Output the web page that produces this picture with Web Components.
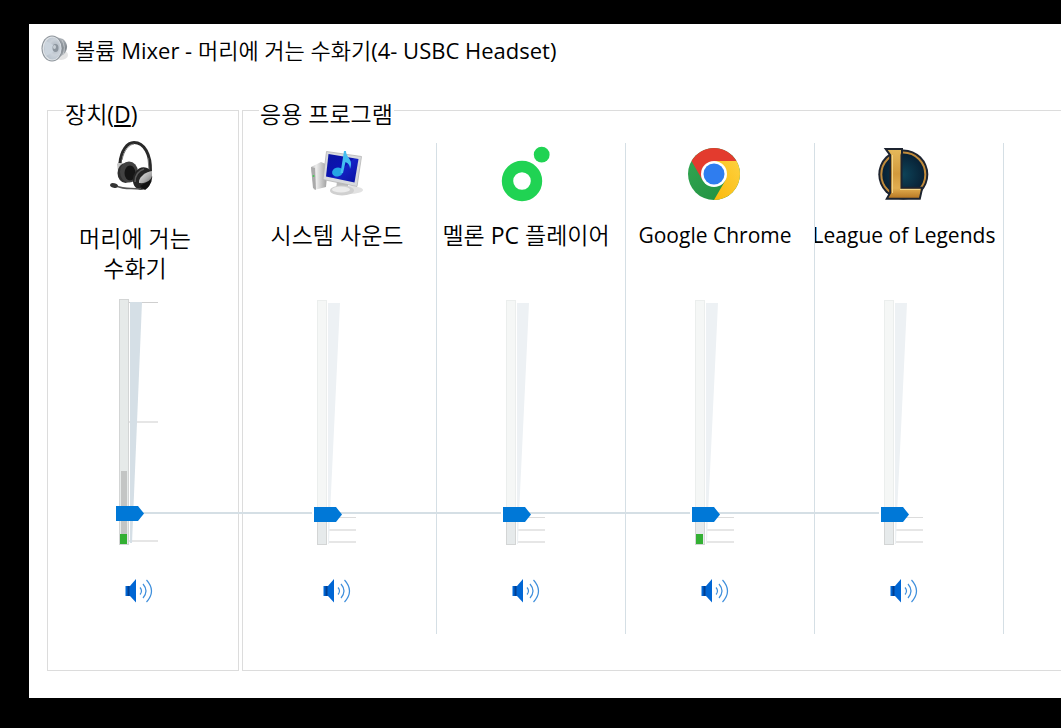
<!DOCTYPE html>
<html lang="ko">
<head>
<meta charset="utf-8">
<title>볼륨 Mixer</title>
<style>
  :root {
    --blue: #0078d7;
    --line: #d5dfe5;
    --box: #dcdcdc;
  }

  body {
    margin: 0;
    padding: 24px 0 30px 29px;
    background: #000;
    color: #000;
    font-family: 'Open Sans', 'Noto Sans CJK KR DemiLight', 'Noto Sans CJK KR', sans-serif;
    font-size: 23px;
    line-height: 30px;
    overflow-x: hidden;
  }
</style>
</head>
<body>

<mixer-window>
  <svg slot="icon" width="28" height="28" viewBox="0 0 28 28" aria-hidden="true">
    <defs>
      <radialGradient id="cone" cx=".65" cy=".45" r=".7">
        <stop offset="0" stop-color="#a9b2bb"/><stop offset=".5" stop-color="#cbd2da"/><stop offset="1" stop-color="#b4bfca"/>
      </radialGradient>
      <linearGradient id="back" x1="0" y1="0" x2="0" y2="1">
        <stop offset="0" stop-color="#b9bec3"/><stop offset=".5" stop-color="#7f868d"/><stop offset="1" stop-color="#c6c9cc"/>
      </linearGradient>
    </defs>
    <ellipse cx="20" cy="20" rx="7" ry="5" fill="#e4e4e4"/>
    <path d="M12 1 L22 4 Q29 10 24 18 L14 26 Z" fill="url(#back)"/>
    <path d="M21 5 Q25 12 22 20" stroke="#c3c8cc" fill="none"/>
    <ellipse cx="11" cy="13.5" rx="10.5" ry="13" fill="#8e959c"/>
    <ellipse cx="11" cy="13.5" rx="9.5" ry="12" fill="#dfe3e7"/>
    <ellipse cx="11.5" cy="13.5" rx="8.5" ry="11" fill="url(#cone)"/>
    <path d="M5 6 L14 11 L14 16 L5 21 Q2 13 5 6 Z" fill="#ccd5de"/>
    <ellipse cx="14.5" cy="13" rx="3" ry="4" fill="#8c959e"/>
    <ellipse cx="13.5" cy="12" rx="1.5" ry="2" fill="#c7ced5"/>
  </svg>
  <span slot="title">볼륨 Mixer - 머리에 거는 수화기(4- USBC Headset)</span>

  <mixer-group class="device">
    <span slot="legend">장치(<u>D</u>)</span>
    <mixer-channel kind="device" value="11.7" meter="10" peak="73">
      <svg slot="icon" width="52" height="52" viewBox="109 143 52 52" overflow="visible" aria-hidden="true">
        <defs>
          <linearGradient id="silver" x1="0" y1="0" x2="1" y2="1">
            <stop offset="0" stop-color="#eee"/><stop offset=".6" stop-color="#aaa"/><stop offset="1" stop-color="#666"/>
          </linearGradient>
        </defs>
        <path d="M117 164 L121 160 L124 167 L118 172 Z" fill="#c4c4c4"/>
        <path d="M120 163 C121 151 127 142.500 134 142.500 C144 142.500 151 154 150.500 172" fill="none" stroke="#292929" stroke-width="3"/>
        <path d="M122 160 C124 150 129 144.500 134 144" fill="none" stroke="#777" stroke-width="1"/>
        <path d="M148 158 L149 170" stroke="#777" stroke-width="1"/>
        <ellipse cx="125.500" cy="173" rx="8" ry="10" fill="#303030"/>
        <ellipse cx="129" cy="172" rx="9" ry="10.500" fill="#424242"/>
        <ellipse cx="130" cy="173" rx="5.500" ry="7.500" fill="#151515"/>
        <ellipse cx="142.500" cy="178.500" rx="9.500" ry="11.500" transform="rotate(20 142.500 178.500)" fill="#252525"/>
        <path d="M135 182 Q135 172 144 169" fill="none" stroke="#5a5a5a" stroke-width="1.500"/>
        <path d="M139 181 C140 176 146 172 152 171 L152 176 C151 180 146 184 139 183 Z" fill="url(#silver)"/>
        <path d="M140 186 L151 180 Q150 187 145 190 Z" fill="#111"/>
        <path d="M116 186 Q122 188.500 131 188.500 L141 189" fill="none" stroke="#555" stroke-width="1.500"/>
        <ellipse cx="114" cy="185.500" rx="4" ry="2.200" transform="rotate(12 114 185.500)" fill="#333"/>
      </svg>
      머리에 거는 수화기
    </mixer-channel>
  </mixer-group>

  <mixer-group class="apps">
    <span slot="legend">응용 프로그램</span>

    <mixer-channel value="11.3">
      <svg slot="icon" width="52" height="52" viewBox="310 148 52 52" overflow="visible" aria-hidden="true">
        <defs>
          <linearGradient id="screen" x1="0" y1="0" x2="1" y2="1">
            <stop offset="0" stop-color="#0a15a0"/><stop offset=".5" stop-color="#0b12b4"/><stop offset=".52" stop-color="#1523c6"/><stop offset="1" stop-color="#0810a0"/>
          </linearGradient>
          <linearGradient id="tower" x1="0" y1="0" x2="1" y2="0">
            <stop offset="0" stop-color="#b8b8b8"/><stop offset=".3" stop-color="#eee"/><stop offset="1" stop-color="#999"/>
          </linearGradient>
        </defs>
        <ellipse cx="348" cy="190" rx="14" ry="4" fill="#e2e2e2"/>
        <path d="M310 167 L320 162 L327 165 L325 187 L313 190 Z" fill="url(#tower)"/>
        <path d="M310 167 L314 168 L315 190 L312 188 Z" fill="#aaa"/>
        <circle cx="312.500" cy="176" r="1" fill="#4c5"/>
        <path d="M336 181 L347 183 L347 190 L335 190 Z" fill="#bbb"/>
        <ellipse cx="341" cy="190.500" rx="12" ry="5" fill="#d0d0d0"/>
        <ellipse cx="340" cy="189.500" rx="9" ry="3" fill="#ececec"/>
        <path d="M325.500 151.500 L360.500 156.500 L356 186.500 L322 179.500 Z" fill="#d8dadd" stroke="#b5b5b5" stroke-width=".8"/>
        <path d="M327.500 154 L357.500 159 L353.500 182.500 L325 176.500 Z" fill="url(#screen)"/>
        <ellipse cx="336.500" cy="172" rx="5.500" ry="4.500" transform="rotate(-15 336.500 172)" fill="#25a5e4"/>
        <path d="M339.500 173 L343 151 L345 151 C345 158 353 159 349 169 C349 164 346 163 344.500 162 L342 173 Z" fill="#43bdf0"/>
      </svg>
      시스템 사운드
    </mixer-channel>

    <mixer-channel value="11.3">
      <svg slot="icon" width="52" height="52" viewBox="500 148 52 52" overflow="visible" aria-hidden="true">
        <circle cx="522" cy="181" r="14.500" fill="none" stroke="#20d353" stroke-width="11.400"/>
        <circle cx="541.700" cy="154.700" r="7.900" fill="#20d353"/>
      </svg>
      멜론 PC 플레이어
    </mixer-channel>

    <mixer-channel value="11.3" meter="10" lang="en">
      <svg slot="icon" width="52" height="52" viewBox="0 0 52 52" overflow="visible" aria-hidden="true">
        <defs>
          <linearGradient id="green" x1="0" y1="0" x2="1" y2="1">
            <stop offset="0" stop-color="#34a853"/><stop offset="1" stop-color="#1e8e3e"/>
          </linearGradient>
          <linearGradient id="yellow" x1="1" y1="0" x2="0" y2="1">
            <stop offset="0" stop-color="#fdd13f"/><stop offset="1" stop-color="#fbb90a"/>
          </linearGradient>
        </defs>
        <circle cx="25" cy="26" r="26" fill="url(#green)"/>
        <path d="M25 13 H47.500 A26 26 0 0 1 25 52 L36.300 32.500 Z" fill="url(#yellow)"/>
        <path d="M25 13 H47.500 A26 26 0 0 0 2.500 13 L13.700 32.500 Z" fill="#e33b2e"/>
        <circle cx="25" cy="26" r="13" fill="#fff"/>
        <circle cx="25" cy="26" r="10.500" fill="#2f7def"/>
      </svg>
      Google Chrome
    </mixer-channel>

    <mixer-channel value="11.3" lang="en" last>
      <svg slot="icon" width="52" height="52" viewBox="0 0 52 52" overflow="visible" aria-hidden="true">
        <defs>
          <radialGradient id="navy">
            <stop offset="0" stop-color="#0d4358"/><stop offset="1" stop-color="#081f33"/>
          </radialGradient>
          <linearGradient id="gold" x1="0" y1="0" x2="0" y2="1">
            <stop offset="0" stop-color="#e5b85a"/><stop offset=".5" stop-color="#d29a3c"/><stop offset=".8" stop-color="#e2ae50"/><stop offset="1" stop-color="#b87925"/>
          </linearGradient>
        </defs>
        <circle cx="25.300" cy="26.500" r="25" fill="#1d2430"/>
        <circle cx="25.300" cy="26.500" r="22" fill="url(#navy)" stroke="#c18b3b" stroke-width="2"/>
        <path d="M9.700 2 H23 V5 L22.500 7 V40.700 H43 L41 49.800 H10.500 L13.200 45 V6.700 Z" fill="url(#gold)" stroke="#1d2430" stroke-width="4" paint-order="stroke"/>
        <path d="M14.500 7 V45" stroke="#f3d588"/>
        <path d="M22 41.500 H42" stroke="#f3d588"/>
      </svg>
      League of Legends
    </mixer-channel>
  </mixer-group>
</mixer-window>

<script>
'use strict';

function makeTemplate(html) {
  const template = document.createElement('template');
  template.innerHTML = html;
  return template;
}

/* ---------- Window ---------- */
const windowTemplate = makeTemplate(`
  <style>
    :host {
      display: block;
      background: #fff;
      overflow: hidden;
    }

    header {
      display: flex;
      align-items: center;
      gap: 6px;
      height: 28px;
      padding: 11px 12px 27px;
    }

    h1 {
      margin: 0;
      padding-top: 2px;
      font-size: 22px;
      font-weight: inherit;
      white-space: nowrap;
    }

    .groups {
      display: flex;
      gap: 3px;
      padding: 0 0 27px 18px;
      margin-right: -1px;
    }

    ::slotted(.device) {
      flex: none;
      width: 192px;
    }

    ::slotted(.apps) {
      flex: 1;
      min-width: 0;
      --inset: 5px;
    }
  </style>

  <header>
    <slot name="icon"></slot>
    <h1><slot name="title"></slot></h1>
  </header>
  <main class="groups"><slot></slot></main>
`);

class MixerWindow extends HTMLElement {
  constructor() {
    super();
    this.attachShadow({ mode: 'open' });
    this.shadowRoot.appendChild(windowTemplate.content.cloneNode(true));
  }
}
customElements.define('mixer-window', MixerWindow);

/* ---------- Group box ---------- */
const groupTemplate = makeTemplate(`
  <style>
    :host {
      display: block;
    }

    fieldset {
      margin: 0;
      padding: 13px 0 36px;
      border: 1px solid var(--box);
      min-width: 0;
    }

    /* the caption hangs a little below the border line */
    legend {
      margin-left: 16px;
      padding: 8px 1px 0;
      line-height: 32px;
    }

    .row {
      display: flex;
      padding-left: var(--inset, 0);
    }
  </style>

  <fieldset>
    <legend><slot name="legend"></slot></legend>
    <div class="row"><slot></slot></div>
  </fieldset>
`);

class MixerGroup extends HTMLElement {
  constructor() {
    super();
    this.attachShadow({ mode: 'open' });
    this.shadowRoot.appendChild(groupTemplate.content.cloneNode(true));
  }
}
customElements.define('mixer-group', MixerGroup);

/* ---------- Fader ---------- */
const faderTemplate = makeTemplate(`
  <style>
    :host {
      display: block;
      position: relative;
      width: 46px;
      height: 248px;
    }

    svg {
      display: block;
    }

    /* the range input lies over the drawn trough */
    input {
      position: absolute;
      top: -4px;
      left: -2px;
      width: 30px;
      height: 254px;
      margin: 0;
      appearance: none;
      background: none;
      writing-mode: vertical-lr;
      direction: rtl;
    }

    input::-webkit-slider-thumb {
      appearance: none;
      width: 30px;
      height: 15px;
      background: linear-gradient(to right, #fff 2px, var(--blue) 2px);
      clip-path: polygon(0 0, 24px 0, 100% 50%, 24px 100%, 0 100%);
    }
  </style>

  <svg width="46" height="248" viewBox="0 0 46 248" shape-rendering="crispEdges" aria-hidden="true"></svg>
  <input type="range" min="0" max="100" step="0.1">
`);

class MixerFader extends HTMLElement {
  constructor() {
    super();
    this.attachShadow({ mode: 'open', delegatesFocus: true });
    this.shadowRoot.appendChild(faderTemplate.content.cloneNode(true));
  }

  connectedCallback() {
    const meter = Number(this.getAttribute('meter')) || 0;
    const peak = Number(this.getAttribute('peak')) || 0;
    const input = this.shadowRoot.querySelector('input');

    input.value = this.getAttribute('value');
    input.setAttribute('aria-label', this.getAttribute('name'));

    let drawing = '';
    if (this.getAttribute('kind') === 'device') {
      drawing += `
        <path d="M13 3.500 H42" stroke="#cfcfcf"/>
        <path d="M13 123 H42 M13 242 H42" stroke="#e6e6e6" stroke-width="2"/>
        <path d="M14 3 H26 L16 244 H14 Z" fill="#d5dfe6" shape-rendering="auto"/>
        <rect x="3.500" y=".5" width="9" height="245" fill="#e6eae9" stroke="#d3d5d5"/>`;
    } else {
      drawing += `
        <path d="M14 218.500 H42" stroke="#dcdcdc"/>
        <path d="M14 231 H42 M14 243 H42" stroke="#e6e6e6" stroke-width="2"/>
        <path d="M14 4 H26 L16 215 L15 245 H14 Z" fill="#edf1f4" shape-rendering="auto"/>
        <rect x="3.500" y="1.500" width="9" height="244" fill="#f5f7f6" stroke="#ebeeed"/>
        <rect x="3.500" y="215.500" width="9" height="30" fill="#e6eaeb" stroke="#d3d5d5"/>`;
    }
    if (peak) {
      drawing += `<rect x="5" y="${245 - peak}" width="6" height="${peak}" fill="#c3c5c4"/>`;
    }
    if (meter) {
      drawing += `<rect x="4" y="${245 - meter}" width="7" height="${meter}" fill="#33b033"/>`;
    }
    this.shadowRoot.querySelector('svg').innerHTML = drawing;
  }
}
customElements.define('mixer-fader', MixerFader);

/* ---------- Mute button ---------- */
const muteTemplate = makeTemplate(`
  <style>
    :host {
      display: block;
    }

    button {
      display: block;
      padding: 0;
      border: 0;
      background: none;
    }

    svg {
      display: block;
    }
  </style>

  <button type="button">
    <svg width="28" height="26" viewBox="0 0 28 26" aria-hidden="true">
      <path d="M5 8 L11 1 V24.500 L5 18 Z" fill="#0066d4"/>
      <path d="M.5 8 H5 V18 H.5 Z" fill="#0066d4"/>
      <path d="M2.500 8 H4.500 V18 H2.500 Z" fill="#003f93"/>
      <g fill="none" stroke="#3f8fdc" stroke-width="1.200">
        <path d="M15 9.500 Q18 13 15 16.500"/>
        <path d="M18 6 Q24 13 18 20"/>
        <path d="M21.500 2 Q31.500 13 21.500 24"/>
      </g>
    </svg>
  </button>
`);

class MixerMute extends HTMLElement {
  constructor() {
    super();
    this.attachShadow({ mode: 'open', delegatesFocus: true });
    this.shadowRoot.appendChild(muteTemplate.content.cloneNode(true));
  }

  connectedCallback() {
    this.shadowRoot
      .querySelector('button')
      .setAttribute('aria-label', this.getAttribute('name') + ' 음소거');
  }
}
customElements.define('mixer-mute', MixerMute);

/* ---------- Channel ---------- */
const channelTemplate = makeTemplate(`
  <style>
    :host {
      display: flex;
      flex: none;
      flex-direction: column;
      align-items: center;
      position: relative;
      box-sizing: border-box;
      width: 189px;
      height: 491px;
      padding-right: 10px;
      border-right: 1px solid var(--line);
      overflow: hidden;
    }

    :host(:lang(en)) {
      font-size: 21px;
    }

    :host([kind='device']) {
      width: 174px;
      padding-right: 0;
      border: 0;
      overflow: visible;
    }

    .head {
      display: flex;
      flex: none;
      flex-direction: column;
      align-items: center;
      gap: 20px;
      box-sizing: border-box;
      height: 156px;
      padding-top: 5px;
      white-space: nowrap;
    }

    :host([kind='device']) .head {
      gap: 28px;
      width: 140px;
      padding-top: 0;
      white-space: normal;
      word-break: keep-all;
      text-align: center;
    }

    .controls {
      position: relative;
    }

    :host([kind='device']) .controls {
      padding-left: 8px;
    }

    mixer-mute {
      margin: 31px 0 0 9px;
    }

    /* line that joins the thumbs of all channels */
    .link {
      position: absolute;
      top: 369px;
      left: 0;
      right: 0;
      height: 2px;
      background: var(--line);
    }

    :host([kind='device']) .link {
      left: 50%;
      right: -26px;
    }

    :host([last]) .link {
      right: 60%;
    }
  </style>

  <div class="head">
    <slot name="icon"></slot>
    <label for="fader"><slot></slot></label>
  </div>
  <div class="link"></div>
  <div class="controls">
    <mixer-fader id="fader"></mixer-fader>
    <mixer-mute></mixer-mute>
  </div>
`);

class MixerChannel extends HTMLElement {
  constructor() {
    super();
    this.attachShadow({ mode: 'open' });
    const content = channelTemplate.content.cloneNode(true);
    const fader = content.querySelector('mixer-fader');
    const label = content.querySelector('label');
    const name = this.textContent.trim();

    ['kind', 'value', 'meter', 'peak'].forEach((key) => {
      if (this.hasAttribute(key)) fader.setAttribute(key, this.getAttribute(key));
    });
    fader.setAttribute('name', name);
    content.querySelector('mixer-mute').setAttribute('name', name);

    // a label cannot point into the fader's own shadow root
    label.addEventListener('click', () => fader.focus());
    this.shadowRoot.appendChild(content);
  }
}
customElements.define('mixer-channel', MixerChannel);
</script>
</body>
</html>
